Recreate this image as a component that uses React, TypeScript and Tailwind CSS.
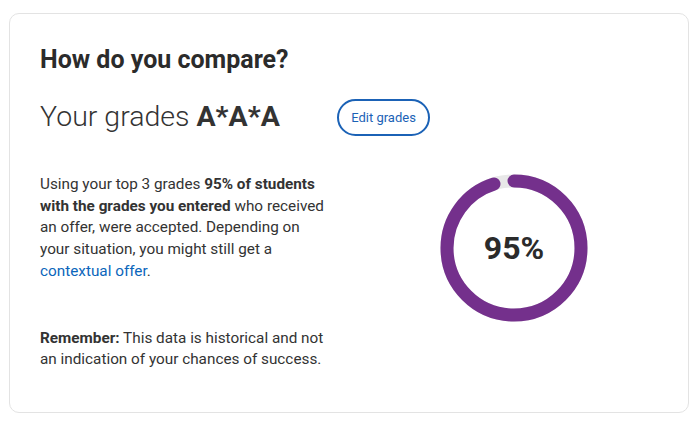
import React from "react";

function Ring({ pct }: { pct: number }) {
  const r = 67;
  const c = 2 * Math.PI * r;
  const len = (pct / 100) * c;
  return (
    <div className="relative w-[148px] h-[148px]">
      <svg width="148" height="148" viewBox="0 0 148 148" className="absolute inset-0">
        <circle cx="74" cy="74" r={r} fill="none" stroke="#e8e8e8" strokeWidth="13" />
        <circle
          cx="74"
          cy="74"
          r={r}
          fill="none"
          stroke="#74308c"
          strokeWidth="13"
          strokeLinecap="round"
          strokeDasharray={`${len} ${c}`}
          transform="rotate(-90 74 74)"
        />
      </svg>
      <div className="absolute inset-0 flex items-center justify-center text-[32px] font-bold text-[#2b2b2b]">
        95%
      </div>
    </div>
  );
}

export default function App() {
  return (
    <div className="w-[692px] h-[433px] bg-white pt-[13px] pl-[9px]" style={{ fontFamily: "Roboto, 'Liberation Sans', sans-serif" }}>
      <div className="w-[680px] h-[400px] border border-[#e3e3e3] rounded-[10px] pl-[30px] pt-[32px] text-[#333333]">
        <h2 className="text-[25px] leading-[28px] font-bold text-[#2b2b2b]">How do you compare?</h2>
        <div className="flex items-center mt-[25px]">
          <div className="w-[297px] text-[28.5px] leading-[38px] font-light text-[#333333] mt-[-2px]">
            Your grades <span className="font-bold">A*A*A</span>
          </div>
          <button className="h-[37px] w-[93px] rounded-full border-2 border-[#1b62b6] text-[#1b62b6] text-[13px]">
            Edit grades
          </button>
        </div>
        <div className="flex mt-[38px]">
          <div className="w-[291px] text-[15.3px] leading-[21.7px] text-[#333333]">
            <p>
              Using your top 3 grades <b>95% of students with the grades you entered</b> who received an offer,
              were accepted. Depending on your situation, you might still get a{" "}
              <a className="text-[#0b66bb]">contextual offer</a>.
            </p>
            <p className="mt-[45px]">
              <b>Remember:</b> This data is historical and not an indication of your chances of success.
            </p>
          </div>
          <div className="ml-[109px]">
            <Ring pct={95} />
          </div>
        </div>
      </div>
    </div>
  );
}
